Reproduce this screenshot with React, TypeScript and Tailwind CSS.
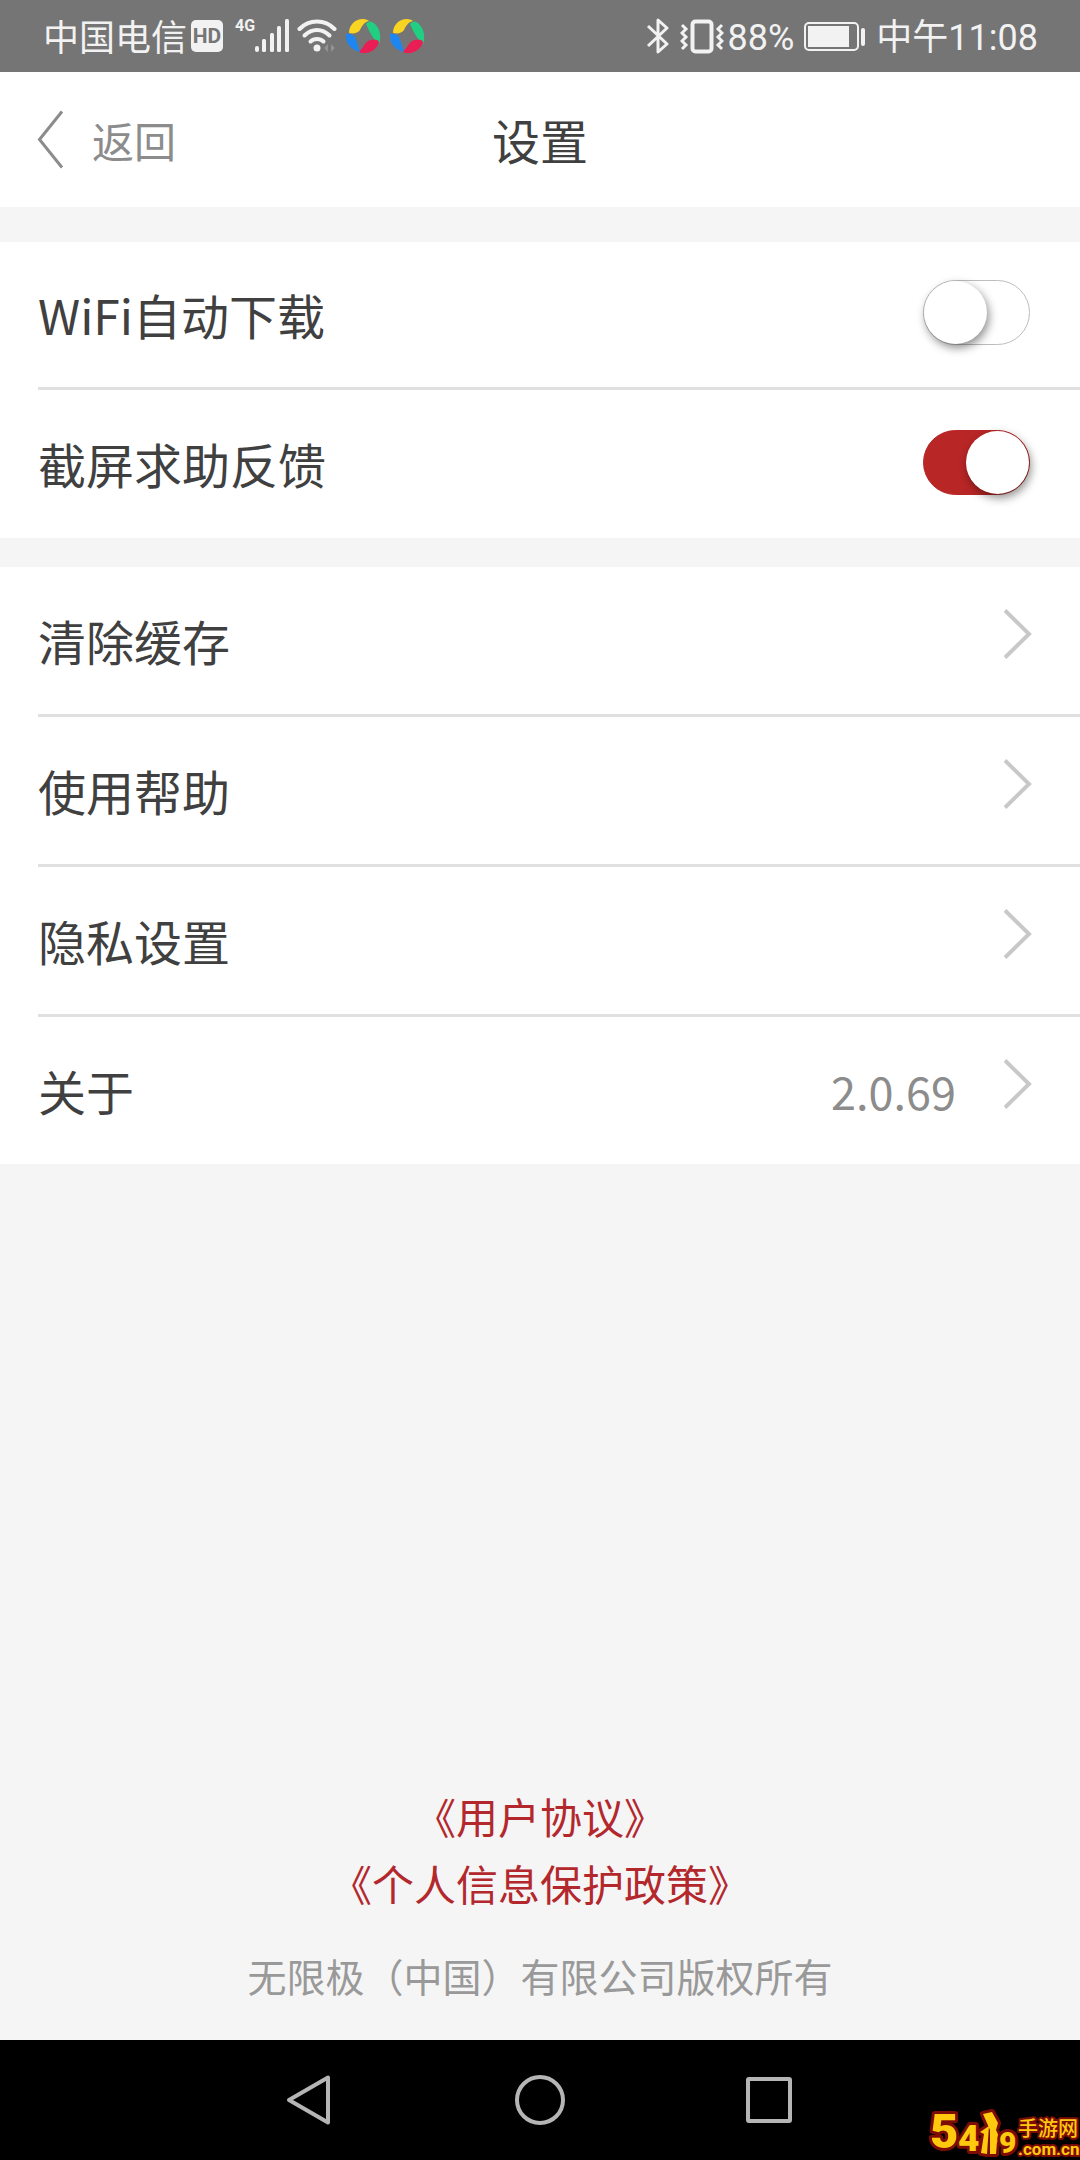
import { useState } from 'react';

const NAV_ROWS = [
  { id: 'cache', label: '清除缓存' },
  { id: 'help', label: '使用帮助' },
  { id: 'privacy', label: '隐私设置' },
  { id: 'about', label: '关于', value: '2.0.69' },
];

export default function App() {
  const [wifiDownload, setWifiDownload] = useState(false);
  const [screenshotHelp, setScreenshotHelp] = useState(true);

  return (
    <div className="flex min-h-screen flex-col bg-[#f5f5f5] font-['Noto_Sans_CJK_SC',sans-serif] text-[#404040]">
      <StatusBar />

      <header className="grid h-[135px] grid-cols-3 items-center bg-white px-9">
        <button type="button" className="flex items-center gap-7 justify-self-start text-[42px] leading-none text-[#8c8c8c]">
          <svg className="h-15 w-7" viewBox="0 0 28 60" fill="none" stroke="currentColor" strokeWidth="3">
            <path d="M26 1.500 3.500 29.500 26 57.500" />
          </svg>
          返回
        </button>
        <h1 className="pb-0.5 text-center text-[48px] leading-none">设置</h1>
      </header>

      <main className="flex grow flex-col">
        <section className="mt-[35px] bg-white pl-[38px]">
          <ToggleRow id="wifi" label="WiFi自动下载" checked={wifiDownload} onChange={setWifiDownload} divider />
          <ToggleRow id="shot" label="截屏求助反馈" checked={screenshotHelp} onChange={setScreenshotHelp} />
        </section>

        <section className="mt-[29px] bg-white pl-[38px]">
          {NAV_ROWS.map((row) => (
            <button
              key={row.id}
              type="button"
              className="flex h-[150px] w-full items-center border-b-3 border-[#e0e0e0] pr-12 text-left last:h-[147px] last:border-b-0"
            >
              <span className="grow pb-0.5 text-[48px] leading-none">{row.label}</span>
              {row.value && <span className="text-[45px] leading-none text-[#8c8c8c]">{row.value}</span>}
              <svg className="mb-3.5 ml-12 h-13 w-7" viewBox="0 0 28 52" fill="none" stroke="#c8c8c8" strokeWidth="4">
                <path d="M1 2.500 25 26 1 49.500" />
              </svg>
            </button>
          ))}
        </section>

        <footer className="mt-auto flex flex-col items-center pb-9 text-center">
          <a href="#agreement" className="text-[42px] leading-[67px] text-[#b3282d]">《用户协议》</a>
          <a href="#privacy" className="text-[42px] leading-[67px] text-[#b3282d]">《个人信息保护政策》</a>
          <p className="mt-8 mb-0.5 text-[39px] leading-[54px] text-[#999]">无限极（中国）有限公司版权所有</p>
        </footer>
      </main>

      <SystemNav />
    </div>
  );
}

function ToggleRow({ id, label, checked, onChange, divider }: {
  id: string; label: string; checked: boolean; onChange: (v: boolean) => void; divider?: boolean;
}) {
  return (
    <div className={`flex h-[148px] items-center justify-between pr-[50px] ${divider ? 'border-b-3 border-[#e0e0e0]' : ''}`}>
      <label htmlFor={id} className="pb-0.5 text-[48px] leading-none">{label}</label>
      <input
        id={id}
        type="checkbox"
        role="switch"
        checked={checked}
        onChange={(e) => onChange(e.target.checked)}
        className="mb-1 flex h-[65px] w-[107px] appearance-none rounded-full border border-[#bdbdbd] bg-white before:size-[63px] before:rounded-full before:bg-white before:shadow-[2px_4px_10px_rgba(0,0,0,0.45)] checked:justify-end checked:border-[#b92626] checked:bg-[#b92626]"
      />
    </div>
  );
}

function StatusBar() {
  return (
    <div className="flex h-18 items-center justify-between bg-[#757575] pr-[42px] pl-[43px] text-[36px] leading-none text-[#f2f2f2]">
      <div className="flex items-center">
        <span className="pb-0.5">中国电信</span>
        <span className="ml-1 flex h-8 w-8 items-center justify-center rounded-[5px] bg-[#f2f2f2] font-[Roboto,sans-serif] text-[21px] font-bold text-[#757575]">HD</span>
        <span className="mb-5 ml-3 font-[Roboto,sans-serif] text-[16px] font-bold">4G</span>
        <svg className="h-9 w-9" viewBox="0 0 36 36" fill="#f2f2f2">
          <rect x="0" y="28" width="4" height="6" rx="2" />
          <rect x="7" y="21" width="4" height="13" rx="1.500" />
          <rect x="15" y="15" width="4" height="19" rx="1.500" />
          <rect x="22" y="8" width="4" height="26" rx="1.500" />
          <rect x="30" y="1" width="4" height="33" rx="1.500" />
        </svg>
        <svg className="ml-1.5 h-9 w-10" viewBox="0 0 40 36" fill="none" stroke="#f2f2f2" strokeWidth="4" strokeLinecap="round">
          <path d="M2.500 11C12 1 28 1 37.500 11" />
          <path d="M7.500 17.500C15 10 25 10 32.500 17.500" />
          <path d="M13.500 23.500C17 20 23 20 26.500 23.500" />
          <circle cx="20" cy="30" r="3.500" fill="#f2f2f2" stroke="none" />
          <path d="m31 26-4 4 4 4zM34 26l4 4-4 4z" fill="#929292" stroke="none" />
        </svg>
        <Pinwheel />
        <Pinwheel />
      </div>

      <div className="flex items-center">
        <svg className="h-9 w-6" viewBox="0 0 24 36" fill="none" stroke="#f2f2f2" strokeWidth="3" strokeLinejoin="round">
          <path d="M2 8 21 26 12 34V2l9 8L2 28" />
        </svg>
        <svg className="ml-2.5 h-9 w-11" viewBox="0 0 44 36" fill="none" stroke="#f2f2f2">
          <rect x="12.500" y="3.500" width="19" height="30" rx="3" strokeWidth="4" />
          <path d="m2 7 4 4-4 4 4 4-4 4 4 4-4 4M42 7l-4 4 4 4-4 4 4 4-4 4 4 4" strokeWidth="3" />
        </svg>
        <span className="ml-1 pt-1 font-[Roboto,sans-serif]">88%</span>
        <svg className="ml-2.5 h-9 w-16" viewBox="0 0 64 36" fill="none">
          <rect x="1" y="5" width="53" height="27" rx="4" stroke="#f2f2f2" strokeWidth="2" />
          <rect x="4" y="8" width="41" height="21" fill="#f2f2f2" />
          <rect x="57" y="10" width="4" height="18" rx="2" fill="#f2f2f2" />
        </svg>
        <span className="ml-2 pt-1 font-[Roboto,'Noto_Sans_CJK_SC',sans-serif]">中午11:08</span>
      </div>
    </div>
  );
}

function Pinwheel() {
  return (
    <svg className="ml-2 h-9 w-9" viewBox="0 0 36 36">
      <path d="M4 15C4 8 9 1 18 1c3 0 5 1 6 2-5 1-7 5-9 9-2 3-6 4-11 3Z" fill="#f9d423" />
      <path d="M21 6c2-2 4-3 6-2 6 3 9 10 8 18 0 3-1 4-2 5-2-5-5-7-7-11-2-3-3-6-5-10Z" fill="#21cf83" />
      <path d="M34 25c-3 7-10 11-17 10-2 0-3-1-3-2 3-2 4-4 6-7 2-4 7-5 12-4 2 1 2 2 2 3Z" fill="#e91e55" />
      <path d="M1 16c3-1 7 0 9 3 2 4 3 9 5 15C7 32 0 26 1 16Z" fill="#1e86f0" />
    </svg>
  );
}

function SystemNav() {
  return (
    <nav className="relative flex h-30 items-center justify-center gap-44 bg-black text-[#b5b5b5]">
      <button type="button" aria-label="Back">
        <svg className="h-13 w-13" viewBox="0 0 52 52" fill="none" stroke="currentColor" strokeWidth="4" strokeLinejoin="round">
          <path d="M42 3.500v45L3 26Z" />
        </svg>
      </button>
      <button type="button" aria-label="Home">
        <svg className="h-13 w-13" viewBox="0 0 52 52" fill="none" stroke="currentColor" strokeWidth="4">
          <circle cx="26" cy="26" r="23" />
        </svg>
      </button>
      <button type="button" aria-label="Recent apps">
        <svg className="h-13 w-13" viewBox="0 0 52 52" fill="none" stroke="currentColor" strokeWidth="4" strokeLinejoin="round">
          <rect x="6" y="5" width="42" height="42" rx="1" />
        </svg>
      </button>
      <SiteBadge />
    </nav>
  );
}

function SiteBadge() {
  return (
    <svg
      className="absolute right-0 bottom-0 h-14 w-[152px] font-['Noto_Sans_CJK_SC',sans-serif] font-bold"
      viewBox="0 0 152 56"
      fill="#ffc90e"
      stroke="#7d0c05"
      strokeWidth="6"
      strokeLinejoin="round"
      paintOrder="stroke"
    >
      <text x="2" y="44" fontSize="49" fontFamily="Roboto" fontWeight="900">5</text>
      <text x="30" y="47" fontSize="37" fontFamily="Roboto" fontWeight="900">4</text>
      <path d="M52 28 61 22 59 50 53 49 56 30ZM55 10 64 8 70 19 68 26 73 37 69 38 68 50 62 50 62 26Z" />
      <text x="71" y="49" fontSize="30" fontFamily="Roboto" fontWeight="900">9</text>
      <text x="90" y="32" fontSize="20" fontWeight="500" strokeWidth="4">手游网</text>
      <text x="90" y="51" fontSize="17" fontFamily="Roboto" strokeWidth="4">.com.cn</text>
    </svg>
  );
}
